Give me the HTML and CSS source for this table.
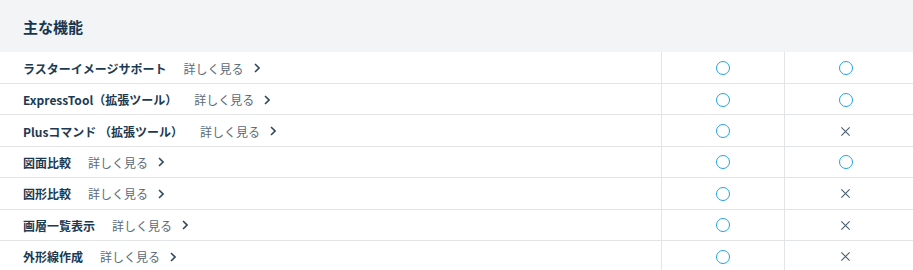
FILE: index.html
```html
<!DOCTYPE html>
<html lang="ja">
<head>
<meta charset="utf-8">
<link rel="stylesheet" href="styles.css">
</head>
<body>
<div class="table">
  <div class="head">主な機能</div>
  <div class="row">
    <div class="name"><span class="label">ラスターイメージサポート</span><a class="more">詳しく見る<svg class="chev" viewBox="0 0 6 10"><path d="M1 1l4 4-4 4"/></svg></a></div>
    <div class="cell"><span class="yes"></span></div>
    <div class="cell"><span class="yes"></span></div>
  </div>
  <div class="row">
    <div class="name"><span class="label">ExpressTool（拡張ツール）</span><a class="more">詳しく見る<svg class="chev" viewBox="0 0 6 10"><path d="M1 1l4 4-4 4"/></svg></a></div>
    <div class="cell"><span class="yes"></span></div>
    <div class="cell"><span class="yes"></span></div>
  </div>
  <div class="row">
    <div class="name"><span class="label">Plusコマンド （拡張ツール）</span><a class="more">詳しく見る<svg class="chev" viewBox="0 0 6 10"><path d="M1 1l4 4-4 4"/></svg></a></div>
    <div class="cell"><span class="yes"></span></div>
    <div class="cell"><svg class="no" viewBox="0 0 12 12"><path d="M1.5 1.5l9 9M10.5 1.5l-9 9"/></svg></div>
  </div>
  <div class="row">
    <div class="name"><span class="label">図面比較</span><a class="more">詳しく見る<svg class="chev" viewBox="0 0 6 10"><path d="M1 1l4 4-4 4"/></svg></a></div>
    <div class="cell"><span class="yes"></span></div>
    <div class="cell"><span class="yes"></span></div>
  </div>
  <div class="row">
    <div class="name"><span class="label">図形比較</span><a class="more">詳しく見る<svg class="chev" viewBox="0 0 6 10"><path d="M1 1l4 4-4 4"/></svg></a></div>
    <div class="cell"><span class="yes"></span></div>
    <div class="cell"><svg class="no" viewBox="0 0 12 12"><path d="M1.5 1.5l9 9M10.5 1.5l-9 9"/></svg></div>
  </div>
  <div class="row">
    <div class="name"><span class="label">画層一覧表示</span><a class="more">詳しく見る<svg class="chev" viewBox="0 0 6 10"><path d="M1 1l4 4-4 4"/></svg></a></div>
    <div class="cell"><span class="yes"></span></div>
    <div class="cell"><svg class="no" viewBox="0 0 12 12"><path d="M1.5 1.5l9 9M10.5 1.5l-9 9"/></svg></div>
  </div>
  <div class="row">
    <div class="name"><span class="label">外形線作成</span><a class="more">詳しく見る<svg class="chev" viewBox="0 0 6 10"><path d="M1 1l4 4-4 4"/></svg></a></div>
    <div class="cell"><span class="yes"></span></div>
    <div class="cell"><svg class="no" viewBox="0 0 12 12"><path d="M1.5 1.5l9 9M10.5 1.5l-9 9"/></svg></div>
  </div>
</div>
</body>
</html>
```
FILE: styles.css
```css
html, body {
  margin: 0;
  padding: 0;
  background: #fff;
}
body {
  font-family: "Noto Sans CJK JP", "Noto Sans", sans-serif;
  color: #1b3a52;
}
.table {
  width: 913px;
}
.head {
  height: 52px;
  box-sizing: border-box;
  background: #f3f4f6;
  padding-left: 23px;
  display: flex;
  align-items: center;
  font-size: 15px;
  font-weight: 700;
  color: #18374f;
}
.row {
  display: grid;
  grid-template-columns: 662px 122px 122px 1fr;
  height: 31.4px;
  border-bottom: 1px solid #e1e5e8;
  box-sizing: border-box;
}
.head + .row { height: 32px; }
.name {
  display: flex;
  align-items: center;
  padding-left: 23px;
  padding-top: 1px;
  border-right: 1px solid #e1e5e8;
}
.label {
  font-size: 12px;
  font-weight: 700;
  color: #1b3a52;
}
.more {
  margin-left: 17px;
  font-size: 12px;
  color: #5b6b78;
  display: flex;
  align-items: center;
}
.chev {
  width: 6px;
  height: 10px;
  margin-left: 10px;
  fill: none;
  stroke: #34495c;
  stroke-width: 1.6;
}
.cell {
  display: flex;
  align-items: center;
  justify-content: center;
  padding-top: 1px;
}
.cell + .cell {
  border-left: 1px solid #e1e5e8;
}
.yes {
  width: 14px;
  height: 14px;
  box-sizing: border-box;
  border: 1.8px solid #22a3e0;
  border-radius: 50%;
}
.no {
  width: 11px;
  height: 11px;
  fill: none;
  stroke: #4a5e70;
  stroke-width: 1.2;
}
```
